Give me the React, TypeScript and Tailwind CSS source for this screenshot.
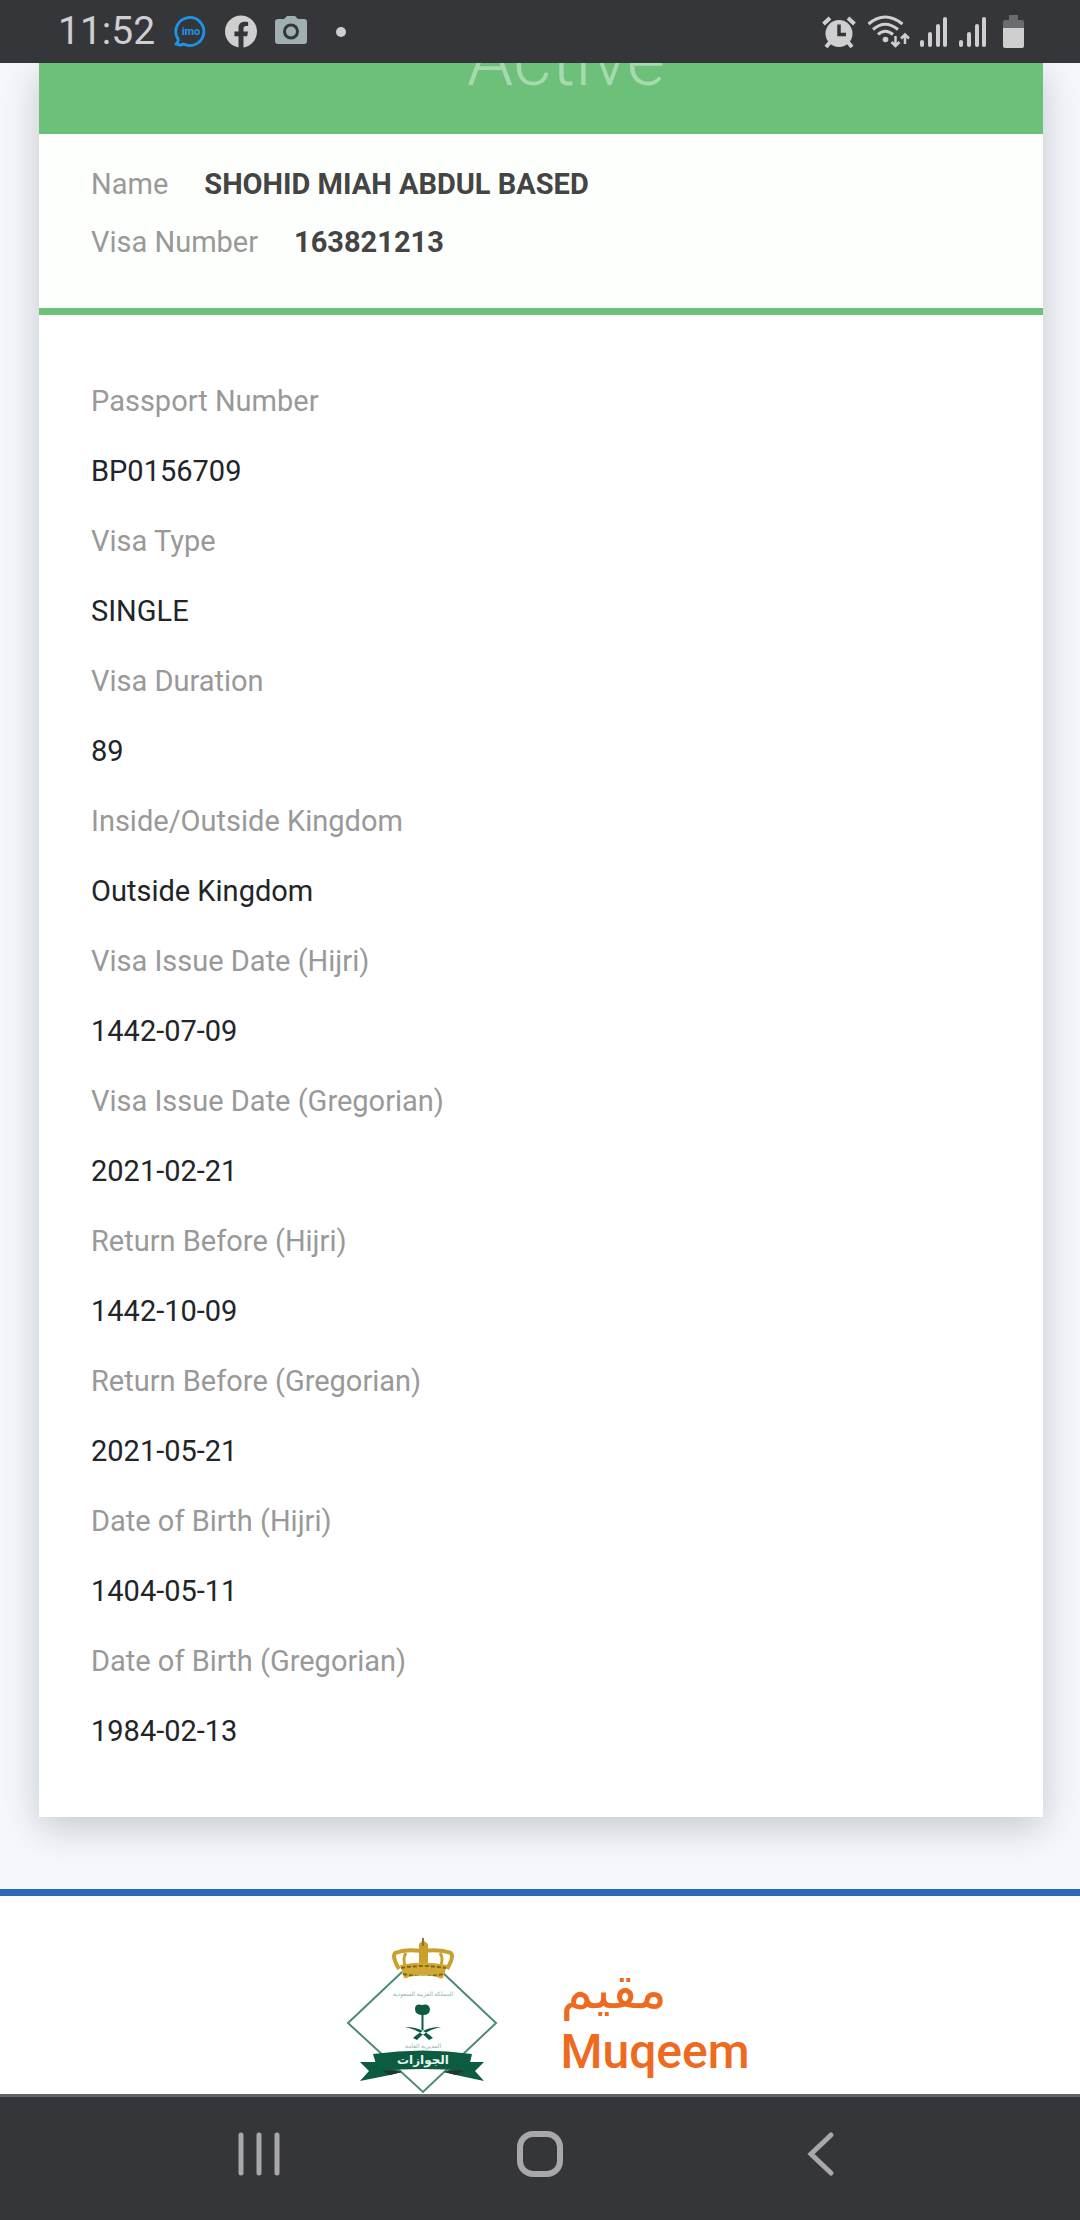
import React from "react";

const fields: [string, string][] = [
  ["Passport Number", "BP0156709"],
  ["Visa Type", "SINGLE"],
  ["Visa Duration", "89"],
  ["Inside/Outside Kingdom", "Outside Kingdom"],
  ["Visa Issue Date (Hijri)", "1442-07-09"],
  ["Visa Issue Date (Gregorian)", "2021-02-21"],
  ["Return Before (Hijri)", "1442-10-09"],
  ["Return Before (Gregorian)", "2021-05-21"],
  ["Date of Birth (Hijri)", "1404-05-11"],
  ["Date of Birth (Gregorian)", "1984-02-13"],
];

function Signal() {
  return (
    <svg width="27" height="32" viewBox="0 0 27 32" fill="#cfcfcf" aria-hidden="true">
      <rect x="0" y="24" width="4" height="7" rx="2" />
      <rect x="8" y="16" width="4" height="15" rx="2" />
      <rect x="16" y="8" width="4" height="23" rx="2" />
      <rect x="23" y="1" width="4" height="30" rx="2" />
    </svg>
  );
}

function StatusBar() {
  return (
    <header className="z-10 flex h-[63px] shrink-0 items-center justify-between bg-[#35363a] pl-[58px] pr-[56px] text-[#cfcfcf]">
      <div className="flex items-center">
        <time className="w-[116px] text-[39px] leading-[63px]">11:52</time>
        <svg width="33" height="33" viewBox="0 0 33 33" aria-label="imo">
          <path d="M4 24A14 14 0 1 1 9.500 29Q6 31 2 29Q5 27 4 24Z" fill="none" stroke="#1e94e6" strokeWidth="2.800" strokeLinejoin="round" />
          <text x="17" y="20" textAnchor="middle" fontSize="11" fontWeight="700" fill="#1e94e6">imo</text>
        </svg>
        <svg className="ml-[18px]" width="32" height="33" viewBox="0 0 24 24" fill="#cfcfcf" aria-label="Facebook">
          <path d="M24 12.073c0-6.627-5.373-12-12-12s-12 5.373-12 12c0 5.990 4.388 10.954 10.125 11.854v-8.385H7.078v-3.470h3.047V9.430c0-3.007 1.792-4.669 4.533-4.669 1.312 0 2.686.235 2.686.235v2.953H15.830c-1.491 0-1.956.925-1.956 1.874v2.250h3.328l-.532 3.470h-2.796v8.385C19.612 23.027 24 18.062 24 12.073z" />
        </svg>
        <svg className="mb-[3px] ml-[18px]" width="32" height="30" viewBox="0 0 32 30" aria-label="Camera">
          <path fillRule="evenodd" fill="#a0b0b0" d="M3 4H9L12 1H20L23 4H29Q32 4 32 7V26Q32 29 29 29H3Q0 29 0 26V7Q0 4 3 4ZM16 8.500A8 8 0 1 0 16 24.500A8 8 0 1 0 16 8.500ZM16 11.500A5 5 0 1 1 16 21.500A5 5 0 1 1 16 11.500Z" />
        </svg>
        <span className="ml-[29px] size-[10px] rounded-full bg-[#cfcfcf]" />
      </div>
      <div className="flex items-center">
        <svg width="34" height="32" viewBox="0 0 34 32" aria-label="Alarm">
          <g stroke="#cfcfcf" strokeWidth="4">
            <path d="M1.500 8L8 2M26 2L32.500 8M4 31L9 25M30 31L25 25" />
          </g>
          <circle cx="17" cy="17.500" r="13.500" fill="#cfcfcf" />
          <path d="M17 8.500V18.500H24" fill="none" stroke="#35363a" strokeWidth="3.500" />
        </svg>
        <svg className="ml-[11px]" width="43" height="33" viewBox="0 0 43 33" aria-label="Wi-Fi">
          <g fill="none" stroke="#cfcfcf" strokeWidth="3">
            <path d="M1.500 9Q18 -5 35.500 9M6 14.500Q18 4 31 14.500M11 19.500Q18 13 26 19.500" />
            <path d="M28.500 21V31M24.500 27L28.500 31L32.500 27M38 29V19M34 23.500L38 19.500L42 23.500" strokeWidth="2.500" />
          </g>
          <circle cx="18.500" cy="24.500" r="2.800" fill="#cfcfcf" />
        </svg>
        <span className="ml-[10px]"><Signal /></span>
        <span className="ml-[12px]"><Signal /></span>
        <svg className="ml-[17px]" width="21" height="33" viewBox="0 0 21 33" aria-label="Battery">
          <path d="M6 0H15V5H19Q21 5 21 7V13H0V7Q0 5 2 5H6Z" fill="#6b6c6f" />
          <path d="M0 13H21V31Q21 33 19 33H2Q0 33 0 31Z" fill="#cfcfcf" />
        </svg>
      </div>
    </header>
  );
}

function Emblem() {
  return (
    <svg width="152" height="156" viewBox="0 0 152 156" aria-label="Passports emblem">
      <path d="M56 34L2 85L77 154L150 85L96 34" fill="none" stroke="#4d8a76" strokeWidth="2" />
      <g fill="none" stroke="#c9a02c" strokeWidth="4">
        <path d="M53 31Q43 14 53 14Q60 11 76 13M101 31Q111 14 101 14Q93 11 76 13" />
        <path d="M60 31Q56 20 60 15M94 31Q98 20 94 15" strokeWidth="3" />
      </g>
      <path d="M73 30V6L77 2L82 6V30Z" fill="#c9a02c" />
      <path d="M77 0V8" stroke="#8c7433" strokeWidth="2" />
      <path d="M54 27Q77 22 101 27L97 40Q77 46 58 40Z" fill="#cfa934" />
      <path d="M55 30Q77 26 100 30M57 36Q77 40 98 36" fill="none" stroke="#846818" strokeWidth="2" strokeDasharray="4 2" />
      <ellipse cx="77" cy="41" rx="17" ry="3.500" fill="#fff" />
      <text x="77" y="58" textAnchor="middle" fontSize="6" fill="#8fb5a8">المملكة العربية السعودية</text>
      <path d="M69 71Q69 65 76 67Q83 65 84 71Q84 77 77 77Q69 77 69 71Z" fill="#0b5c41" />
      <path d="M76.500 76V92" stroke="#0b5c41" strokeWidth="2" />
      <path d="M59 89Q74 88 87 100L83 102Q74 92 59 89ZM95 89Q80 88 67 100L71 102Q80 92 95 89Z" fill="#0b5c41" />
      <text x="77" y="110" textAnchor="middle" fontSize="6" fill="#8fb5a8">المديرية العامة</text>
      <path d="M14 124L30 124L56 134L44 137L14 143L23 133ZM138 124L122 124L98 134L110 137L138 143L129 133Z" fill="#0b5c41" />
      <path d="M33 131L56 134L44 137ZM121 131L98 134L110 137Z" fill="#26352b" />
      <path d="M27 116Q77 109 126 116L122 133Q77 129 32 133Z" fill="#0b5c41" />
      <text x="77" y="126" textAnchor="middle" fontSize="12" fontWeight="700" fill="#e8f2ee">الجوازات</text>
    </svg>
  );
}

export default function App() {
  return (
    <div className="flex min-h-screen flex-col bg-[#f4f8fd] font-['Roboto','DejaVu_Sans',sans-serif]">
      <StatusBar />
      <main className="pb-[72px] pl-[39px] pr-[37px]">
        <article className="bg-white shadow-[0_10px_36px_rgba(0,0,0,0.2)]">
          <div className="flex h-[71px] items-end justify-center overflow-hidden bg-[#6dc07a] pb-[38px] pl-[50px]">
            <h1 className="text-[74px] font-light leading-[72px] text-[#a7d9ae]">Active</h1>
          </div>
          <dl className="border-b-[7px] border-[#6dc07a] bg-[#fdfffc] px-[52px] pb-[37px] pt-[21px] text-[29px] leading-[58px]">
            <div className="flex gap-9">
              <dt className="text-[#999]">Name</dt>
              <dd className="font-bold text-[#444]">SHOHID MIAH ABDUL BASED</dd>
            </div>
            <div className="flex gap-9">
              <dt className="text-[#999]">Visa Number</dt>
              <dd className="font-bold text-[#444]">163821213</dd>
            </div>
          </dl>
          <dl className="px-[52px] py-[51px] text-[29px] leading-[70px]">
            {fields.map(([label, value]) => (
              <div key={label}>
                <dt className="text-[#999]">{label}</dt>
                <dd className="text-[#212529]">{value}</dd>
              </div>
            ))}
          </dl>
        </article>
      </main>
      <footer className="flex flex-1 justify-center gap-[62px] border-t-[7px] border-[#2b6cb8] bg-white pl-4 pt-[42px]">
        <Emblem />
        <div className="pt-[20px] text-[#ee6a20]">
          <p className="text-[53px] leading-[64px]" lang="ar">مقيم</p>
          <p className="text-[48px] font-medium leading-[60px]">Muqeem</p>
        </div>
      </footer>
      <nav className="grid h-[126px] shrink-0 grid-cols-3 items-center justify-items-center border-t-[3px] border-[#606469] bg-[#35363a] px-[118px] pb-[10px]">
        <button aria-label="Recent apps">
          <svg width="42" height="46" viewBox="0 0 42 46" stroke="#a8a8aa" strokeWidth="5" strokeLinecap="round">
            <path d="M3 4V42M21 4V42M39 4V42" />
          </svg>
        </button>
        <button aria-label="Home">
          <svg width="48" height="48" viewBox="0 0 48 48" fill="none" stroke="#a8a8aa" strokeWidth="6">
            <rect x="4" y="4" width="40" height="40" rx="13" />
          </svg>
        </button>
        <button aria-label="Back">
          <svg width="28" height="46" viewBox="0 0 28 46" fill="none" stroke="#a8a8aa" strokeWidth="5" strokeLinecap="round">
            <path d="M24 4L4 23L24 42" />
          </svg>
        </button>
      </nav>
    </div>
  );
}
